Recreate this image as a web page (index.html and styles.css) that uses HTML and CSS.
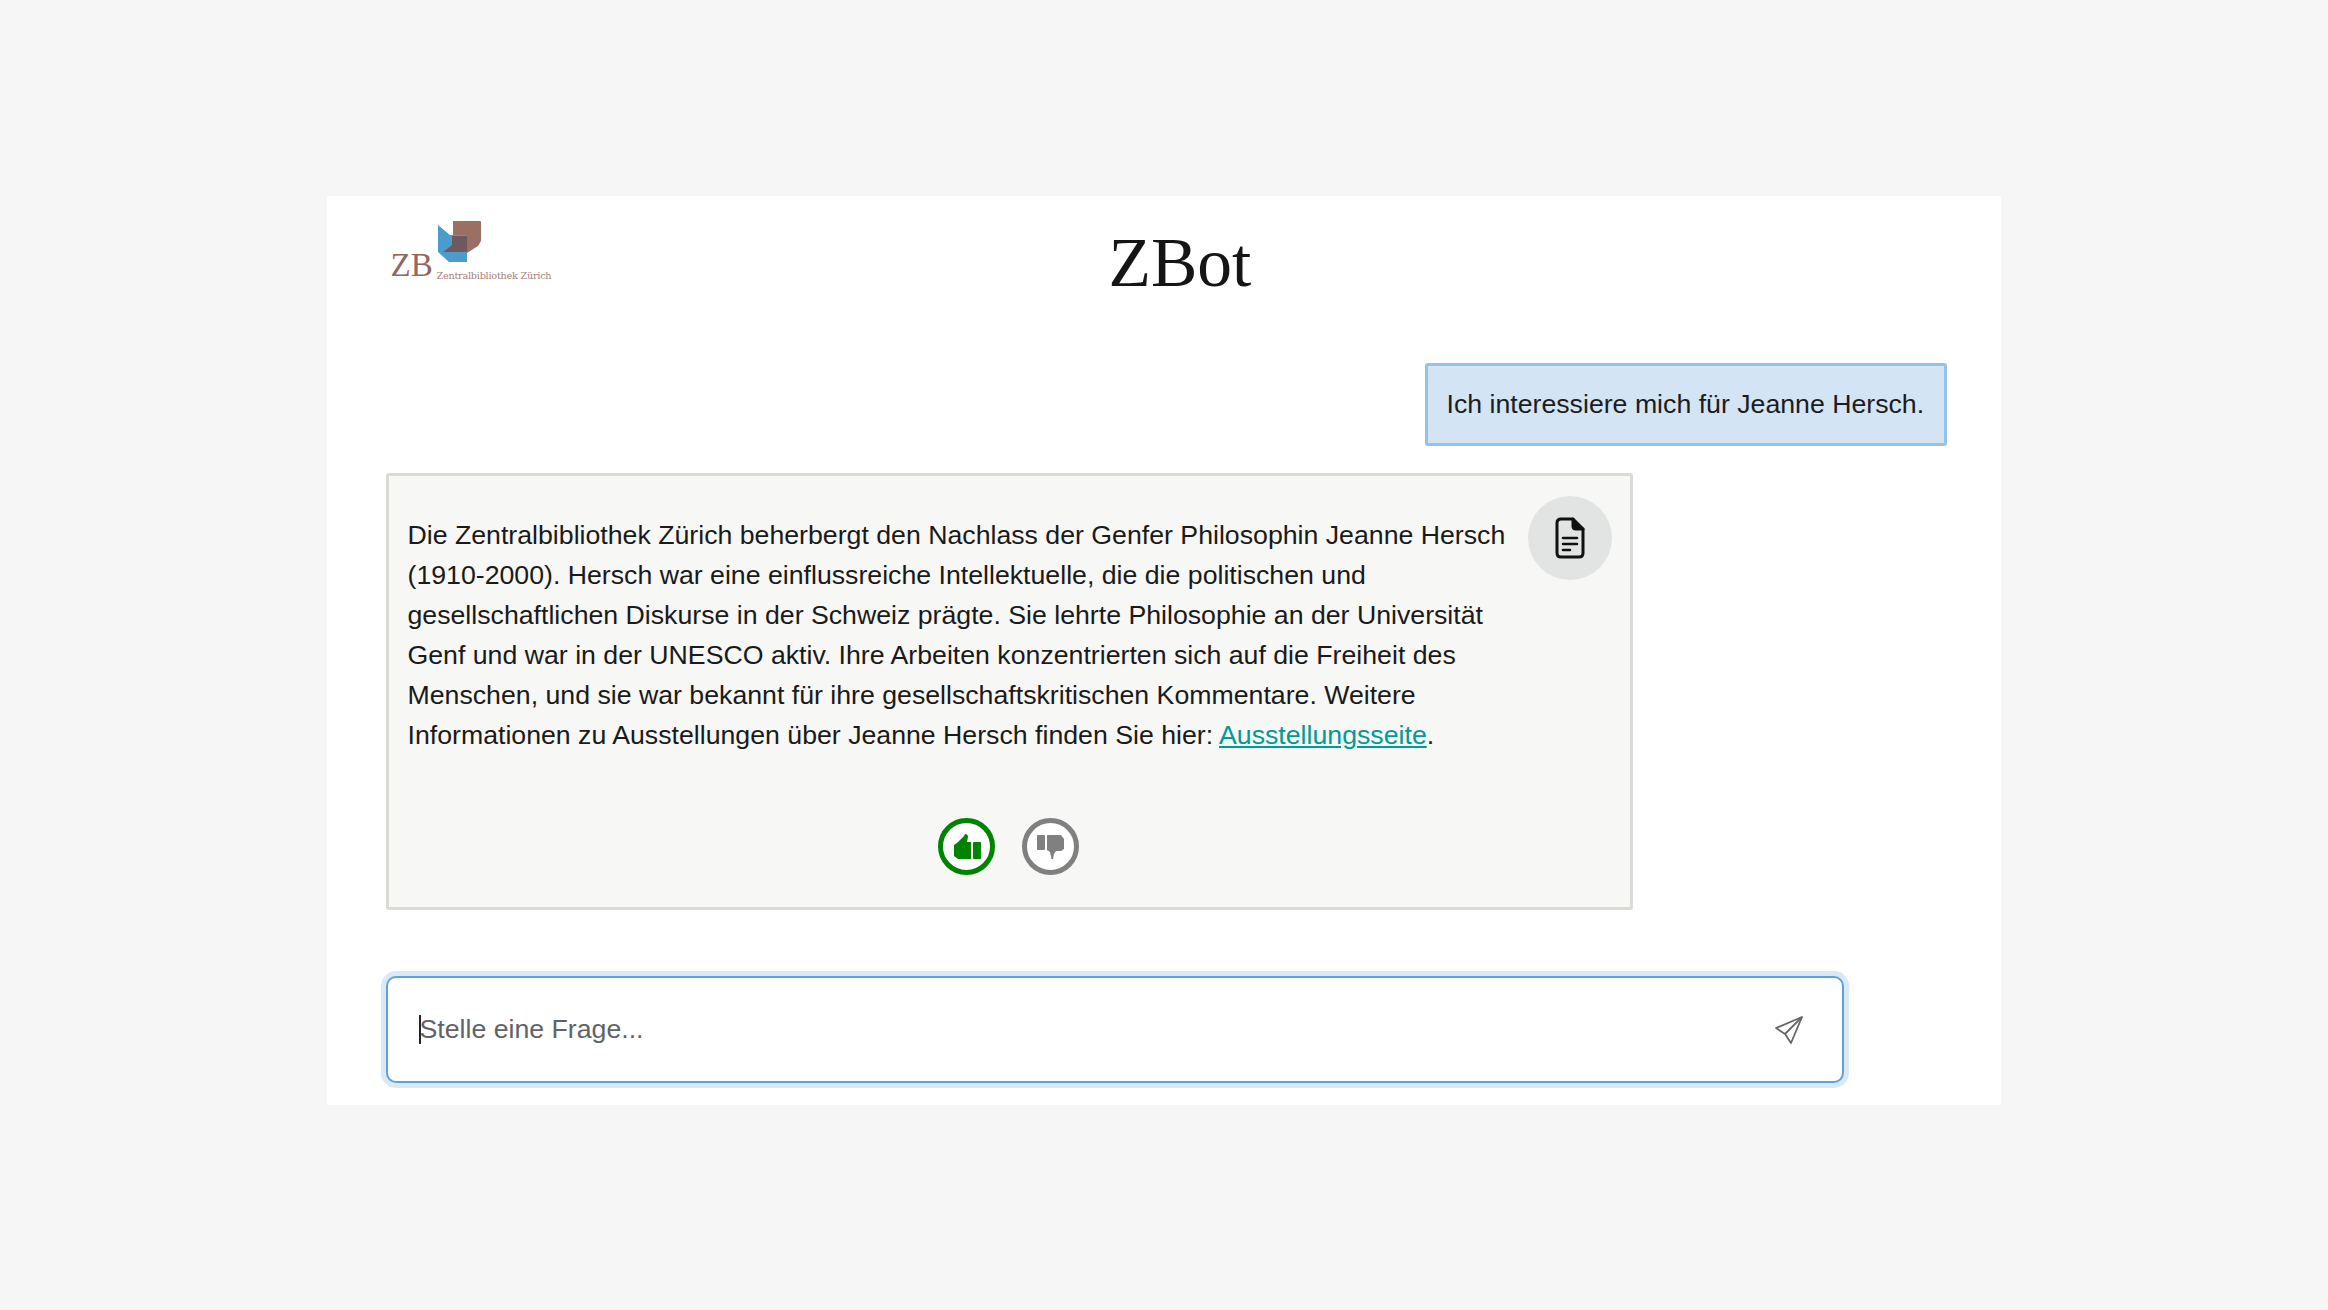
FILE: index.html
```html
<!DOCTYPE html>
<html lang="de">
<head>
<meta charset="utf-8">
<title>ZBot</title>
<link rel="stylesheet" href="styles.css">
</head>
<body>
<main class="card">
  <header class="head">
    <div class="logo">
      <svg class="logo-mark" viewBox="0 0 44 42" width="44" height="42">
        <path d="M15 0H42Q43 0 43 1V20L40 25L29 32V25L13 25L15 16Z" fill="#9a7064"/>
        <path d="M0 4L12 14H28Q29 14 29 15V41H11L0 31Z" fill="#4b9ccd"/>
        <path d="M14 15H28Q29 15 29 16V31H5L14 24Z" fill="#6e5a5c"/>
      </svg>
      <span class="logo-zb">ZB</span>
      <span class="logo-name">Zentralbibliothek Zürich</span>
    </div>
    <h1 class="title">ZBot</h1>
  </header>
  <section class="chat">
    <div class="user-msg">Ich interessiere mich für Jeanne Hersch.</div>
    <article class="bot-msg">
      <div class="bot-top">
        <p class="bot-text">Die Zentralbibliothek Zürich beherbergt den Nachlass der Genfer Philosophin Jeanne Hersch (1910-2000). Hersch war eine einflussreiche Intellektuelle, die die politischen und gesellschaftlichen Diskurse in der Schweiz prägte. Sie lehrte Philosophie an der Universität Genf und war in der UNESCO aktiv. Ihre Arbeiten konzentrierten sich auf die Freiheit des Menschen, und sie war bekannt für ihre gesellschaftskritischen Kommentare. Weitere Informationen zu Ausstellungen über Jeanne Hersch finden Sie hier: <a class="link" href="#">Ausstellungsseite</a>.</p>
        <button class="doc-btn" aria-label="Quellen">
          <svg viewBox="0 0 30 42" width="30" height="42" fill="none" stroke="#111" stroke-width="3" stroke-linejoin="round" stroke-linecap="round">
            <path d="M6 2H18L28 12V36Q28 40 24 40H6Q2 40 2 36V6Q2 2 6 2Z"/>
            <path d="M18 2V9Q18 12 21 12H28" fill="#111"/>
            <path d="M8 21H22M8 27H22M8 33H15" stroke-width="2.6"/>
          </svg>
        </button>
      </div>
      <div class="votes">
        <button class="vote vote-up" aria-label="Gut">
          <svg viewBox="0 0 28 26" width="28" height="26" fill="currentColor"><path d="M1 11L4 9L11 2L12 0Q15 0 15 3L14 8H18V25H5L1 22Z"/><rect x="20" y="8" width="8" height="17" rx="1"/></svg>
        </button>
        <button class="vote vote-down" aria-label="Schlecht">
          <svg viewBox="0 0 28 26" width="28" height="26" fill="currentColor"><rect x="0" y="1" width="8" height="15" rx="1"/><path d="M10 1H24L27 5V15L24 17H19L17 20L16 25H14.500L13 18L10 16Z"/></svg>
        </button>
      </div>
    </article>
  </section>
  <div class="input-box">
    <span class="placeholder"><span class="caret"></span>Stelle eine Frage...</span>
    <svg class="send" viewBox="0 0 28 28" width="28" height="28" fill="none" stroke="#666" stroke-width="1.800" stroke-linejoin="round"><path d="M27 1L1 12L10 18L16 27Z"/><path d="M27 1L10 18"/></svg>
  </div>
</main>
</body>
</html>
```
FILE: styles.css
```css
* { box-sizing: border-box; }
html, body { height: 100%; }
body {
  margin: 0;
  background: #f6f6f6;
  font-family: "Liberation Sans", Arial, sans-serif;
  display: flex;
  justify-content: center;
  padding-top: 196px;
  padding-right: 1px;
}
.card {
  width: 1674px;
  height: 909px;
  background: #fff;
  padding: 0 54px 0 59px;
  display: flex;
  flex-direction: column;
}
.head {
  height: 167px;
  display: flex;
  justify-content: center;
  position: relative;
}
.logo {
  position: absolute;
  left: 5px;
  top: 25px;
  width: 162px;
  height: 62px;
  color: #93675f;
}
.logo-mark { position: absolute; left: 47px; top: 0; }
.logo-zb {
  position: absolute;
  left: 0;
  top: 24px;
  font: 33px/40px "Liberation Serif", serif;
}
.logo-name {
  position: absolute;
  left: 46px;
  top: 48px;
  font: 9.700px/14px "DejaVu Serif", serif;
  white-space: nowrap;
  letter-spacing: -0.25px;
  color: #a47f78;
}
.title {
  margin: 29px 0 0 0;
  position: relative;
  left: 14px;
  font: 400 69.500px/76px "Liberation Serif", serif;
  color: #151515;
}
.chat {
  display: flex;
  flex-direction: column;
  align-items: flex-end;
}
.user-msg {
  width: 522px;
  height: 83px;
  padding: 0 0 1px 19px;
  display: flex;
  align-items: center;
  font-size: 26.700px;
  color: #1c1c1c;
  background: #d3e5f5;
  border: 3px solid #95c2e8;
  border-radius: 3px;
  white-space: nowrap;
}
.bot-msg {
  align-self: flex-start;
  width: 1247px;
  height: 437px;
  margin-top: 27px;
  padding: 20px 18px 0 19px;
  background: #f7f7f5;
  border: 3px solid #d9dcd4;
  border-radius: 3px;
  display: flex;
  flex-direction: column;
}
.bot-top { display: flex; justify-content: space-between; align-items: flex-start; height: 272px; }
.bot-text {
  width: 1120px;
  margin: 19px 0 0;
  font-size: 26.700px;
  line-height: 40px;
  color: #1a1a1a;
}
.link { color: #009a9a; }
.doc-btn {
  width: 84px;
  height: 84px;
  border: 0;
  border-radius: 50%;
  background: #e2e3e3;
  padding: 0;
  display: flex;
  align-items: center;
  justify-content: center;
}
.votes {
  display: flex;
  justify-content: center;
  gap: 27px;
  margin-left: -2px;
  margin-top: 50px;
}
.vote {
  width: 57px;
  height: 57px;
  border-radius: 50%;
  border: 5px solid currentColor;
  background: #fff;
  padding: 0;
  display: flex;
  align-items: center;
  justify-content: center;
}
.vote-up { color: #008400; }
.vote-down { color: #808080; }
.input-box {
  width: 1458px;
  height: 107px;
  margin-top: 66px;
  border: 2px solid #5ba3dd;
  border-radius: 10px;
  box-shadow: 0 0 0 5px #dbe9f7;
  background: #fff;
  display: flex;
  align-items: center;
  justify-content: space-between;
  padding: 0 39px 0 31px;
}
.placeholder { font-size: 26.700px; color: #5f6368; display: flex; align-items: center; }
.caret { width: 2px; height: 29px; background: #222; margin-right: -1px; }
```
